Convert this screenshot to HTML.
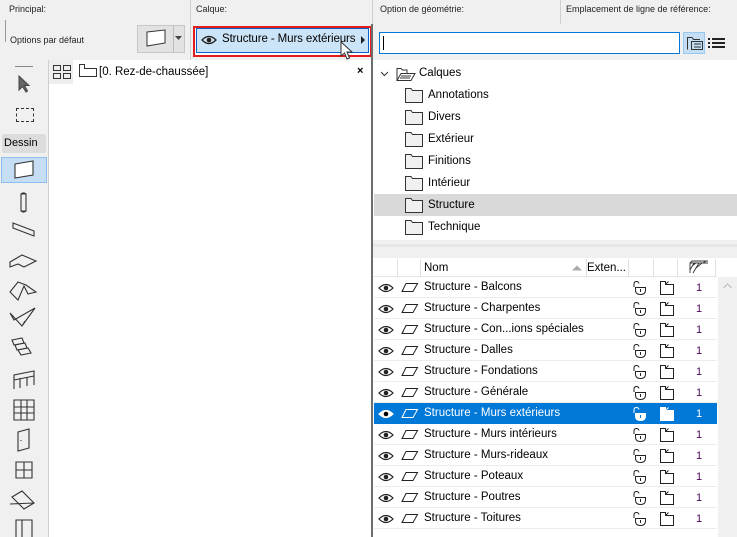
<!DOCTYPE html>
<html><head><meta charset="utf-8"><style>
*{box-sizing:border-box;margin:0;padding:0}
body{width:737px;height:537px;overflow:hidden;background:#f0f0f0;font-family:"Liberation Sans",sans-serif;font-size:11px;color:#000;position:relative}
.a{position:absolute}
.lbl{font-size:9px;color:#222}
.row{position:absolute;left:374px;width:343px;height:21px;border-bottom:1px solid #ececec;background:#fff}
.row .t{position:absolute;left:50px;top:4px;font-size:11.5px}
.row .n{position:absolute;left:322px;top:5px;color:#4a0a5a}
.row svg{position:absolute}
.tr{position:absolute;left:405px;height:22px;width:330px}
.tr .t{position:absolute;left:23px;top:5px;font-size:11.5px}
</style></head><body>
<div class="a lbl" style="left:9px;top:4px">Principal:</div>
<div class="a lbl" style="left:196px;top:4px">Calque:</div>
<div class="a lbl" style="left:380px;top:4px">Option de géométrie:</div>
<div class="a lbl" style="left:566px;top:4px">Emplacement de ligne de référence:</div>
<div class="a" style="left:190px;top:0;width:1px;height:60px;background:#d0d0d0"></div>
<div class="a" style="left:560px;top:0;width:1px;height:24px;background:#d0d0d0"></div>
<div class="a" style="left:372px;top:0;width:1px;height:24px;background:#d0d0d0"></div>
<div class="a" style="left:5px;top:20px;width:1px;height:22px;background:#999"></div>
<div class="a lbl" style="left:10px;top:35px">Options par défaut</div>
<div class="a" style="left:137px;top:25px;width:48px;height:28px;background:#e2e2e2;border:1px solid #c8c8c8"></div>
<svg class="a" style="left:145px;top:29px" width="22" height="20"><path d="M2 3 L20 1 L20 14 L2 17 Z" fill="#fff" stroke="#333"/></svg>
<div class="a" style="left:173px;top:26px;width:1px;height:26px;background:#bbb"></div>
<svg class="a" style="left:175px;top:36px" width="8" height="6"><path d="M0 0H7L3.5 4Z" fill="#444"/></svg>
<div class="a" style="left:193px;top:26px;width:179px;height:31px;border:2px solid #e31b1b;background:#fff"></div>
<div class="a" style="left:196px;top:28px;width:173px;height:25px;background:#cce4f7;border:1px solid #0a64c8"></div>
<svg class="a" style="left:201px;top:35px" width="16" height="10"><path d="M1 5Q8 -2 15 5Q8 12 1 5Z" fill="none" stroke="#222" stroke-width="1.3"/><circle cx="8" cy="5" r="2.3" fill="#222"/></svg>
<div class="a" style="left:222px;top:33px;font-size:11.5px;letter-spacing:-0.1px">Structure - Murs extérieurs</div>
<svg class="a" style="left:361px;top:36px" width="5" height="8"><path d="M0 0V8L4 4Z" fill="#222"/></svg>
<svg class="a" style="left:340px;top:41px" width="14" height="20"><path d="M1 1V15L4.5 12L7 18L9.5 17L7 11H12Z" fill="#fff" stroke="#333"/></svg>
<div class="a" style="left:0;top:60px;width:48px;height:477px;background:#f0f0f0"></div>
<div class="a" style="left:15px;top:66px;width:18px;height:1px;background:#888"></div>
<svg class="a" style="left:17px;top:75px" width="14" height="18"><path d="M2 1V15L5.5 11.5L9 17L10.5 16L7.5 10.5H12Z" fill="#666" stroke="#444"/></svg>
<div class="a" style="left:16px;top:108px;width:18px;height:14px;border:1px dashed #333"></div>
<div class="a" style="left:2px;top:134px;width:44px;height:19px;background:#dcdcdc;border-radius:2px"></div>
<div class="a" style="left:4px;top:137px;font-size:11px">Dessin</div>
<div class="a" style="left:1px;top:157px;width:46px;height:26px;background:#c6def4;border:1px solid #8cbff0"></div>
<svg class="a" style="left:0;top:0" width="48" height="537" fill="none" stroke="#333" stroke-width="1.1">
<g transform="translate(0,170)"><path d="M15 -6L33 -9V5L15 8Z" fill="#fff"/></g>
<g transform="translate(0,202)"><path d="M21 -8h5v17h-5Z M21 -8q2.5-2 5 0 M21 9q2.5 2 5 0"/></g>
<g transform="translate(0,230)"><path d="M13 -7L34 1V6L13 -2Z"/></g>
<g transform="translate(0,260)"><path d="M10 2L22 -5L36 1L24 7L18 4L10 7Z"/></g>
<g transform="translate(0,290)"><path d="M10 2L18 -8L26 -5L36 2L28 4L24 -4L18 10Z"/></g>
<g transform="translate(0,318)"><path d="M10 -5L22 8L35 -10L14 2Z M22 8L25 3"/></g>
<g transform="translate(0,347)"><path d="M12 -7L22 -9L24 -4L14 -2Z M15 -2L25 -4L27 1L17 3Z M18 3L28 1L31 6L21 8Z"/></g>
<g transform="translate(0,380)"><path d="M14 9V-5L34 -9V5 M14 0L34 -4 M20 -2V8 M27 -3V6"/></g>
<g transform="translate(0,410)"><path d="M14 -10H34V10H14Z M14 -3H34 M14 3H34 M21 -10V10 M27 -10V10"/></g>
<g transform="translate(0,440)"><path d="M18 -8L29 -11V8L18 11Z M21 0v1"/></g>
<g transform="translate(0,470)"><path d="M16 -8H32V8H16Z M16 0H32 M24 -8V8"/></g>
<g transform="translate(0,500)"><path d="M12 -3L22 -9L34 3L24 9Z M10 4L34 3"/></g>
<g transform="translate(0,528)"><path d="M16 -8H32V10H16Z M22 -8V10"/></g>
</svg>
<div class="a" style="left:48px;top:60px;width:1px;height:477px;background:#cfcfcf"></div>
<div class="a" style="left:50px;top:465px;width:14px;height:35px;background:#f3f3f3;border-radius:3px"></div>
<div class="a" style="left:58px;top:468px;width:0;height:30px;border-left:1px dashed #f0a060"></div>
<div class="a" style="left:49px;top:60px;width:322px;height:477px;background:#fff"></div>
<div class="a" style="left:49px;top:60px;width:24px;height:24px;background:#eee"></div>
<svg class="a" style="left:52px;top:64px" width="20" height="16" fill="none" stroke="#333"><rect x="1.5" y="1.5" width="7" height="5"/><rect x="11.5" y="1.5" width="7" height="5"/><rect x="1.5" y="9.5" width="7" height="5"/><rect x="11.5" y="9.5" width="7" height="5"/></svg>
<svg class="a" style="left:78px;top:62px" width="20" height="16" fill="none" stroke="#333"><path d="M1.5 14.5V2.5H6.5V6.5H18.5V14.5Z"/></svg>
<div class="a" style="left:99px;top:66px;font-size:11.5px">[0. Rez-de-chaussée]</div>
<div class="a" style="left:357px;top:65px;font-size:11px;font-weight:bold">×</div>
<div class="a" style="left:371px;top:24px;width:2px;height:513px;background:#6d6d6d"></div>
<div class="a" style="left:373px;top:24px;width:364px;height:36px;background:#f0f0f0"></div>
<div class="a" style="left:379px;top:32px;width:301px;height:22px;background:#fff;border:1px solid #0078d7"></div>
<div class="a" style="left:383px;top:36px;width:1px;height:14px;background:#000"></div>
<div class="a" style="left:683px;top:32px;width:22px;height:22px;background:#c6def4;border:1px solid #99c8f0"></div>
<svg class="a" style="left:686px;top:35px" width="18" height="16" fill="none" stroke="#333"><path d="M1.5 14.5V2.5H6L7.5 4.5H14"/><rect x="5.5" y="6.5" width="11" height="8"/><path d="M8 9H15 M8 12H15"/></svg>
<svg class="a" style="left:708px;top:37px" width="18" height="12" fill="#222"><rect x="0" y="1" width="2" height="2"/><rect x="4" y="1" width="13" height="2"/><rect x="0" y="5" width="2" height="2"/><rect x="4" y="5" width="13" height="2"/><rect x="0" y="9" width="2" height="2"/><rect x="4" y="9" width="13" height="2"/></svg>
<div class="a" style="left:373px;top:60px;width:364px;height:180px;background:#fff"></div>
<svg class="a" style="left:380px;top:66px" width="40" height="16" fill="none" stroke="#333"><path d="M1 6L4.5 9.5L8 6"/><path d="M17 14.5V2.5H21L22.5 4H27V7 M17 14.5L21 7.5H35L31 14.5Z M21 10H31 M20 12H30"/></svg>
<div class="a" style="left:419px;top:67px;font-size:11.5px">Calques</div>
<div class="a" style="left:374px;top:194px;width:363px;height:22px;background:#d9d9d9"></div>
<div class="tr" style="top:84px"><svg width="20" height="16" class="a" style="top:3px" fill="#f0f0f0" stroke="#333"><path d="M0.5 15.5V1.5H6L7.5 3.5H17.5V15.5Z"/></svg><div class="t">Annotations</div></div>
<div class="tr" style="top:106px"><svg width="20" height="16" class="a" style="top:3px" fill="#f0f0f0" stroke="#333"><path d="M0.5 15.5V1.5H6L7.5 3.5H17.5V15.5Z"/></svg><div class="t">Divers</div></div>
<div class="tr" style="top:128px"><svg width="20" height="16" class="a" style="top:3px" fill="#f0f0f0" stroke="#333"><path d="M0.5 15.5V1.5H6L7.5 3.5H17.5V15.5Z"/></svg><div class="t">Extérieur</div></div>
<div class="tr" style="top:150px"><svg width="20" height="16" class="a" style="top:3px" fill="#f0f0f0" stroke="#333"><path d="M0.5 15.5V1.5H6L7.5 3.5H17.5V15.5Z"/></svg><div class="t">Finitions</div></div>
<div class="tr" style="top:172px"><svg width="20" height="16" class="a" style="top:3px" fill="#f0f0f0" stroke="#333"><path d="M0.5 15.5V1.5H6L7.5 3.5H17.5V15.5Z"/></svg><div class="t">Intérieur</div></div>
<div class="tr" style="top:194px"><svg width="20" height="16" class="a" style="top:3px" fill="#f0f0f0" stroke="#333"><path d="M0.5 15.5V1.5H6L7.5 3.5H17.5V15.5Z"/></svg><div class="t">Structure</div></div>
<div class="tr" style="top:216px"><svg width="20" height="16" class="a" style="top:3px" fill="#f0f0f0" stroke="#333"><path d="M0.5 15.5V1.5H6L7.5 3.5H17.5V15.5Z"/></svg><div class="t">Technique</div></div>
<div class="a" style="left:373px;top:240px;width:364px;height:18px;background:#f0f0f0"></div>
<div class="a" style="left:373px;top:244px;width:364px;height:3px;background:#e6e6e6"></div>
<div class="a" style="left:373px;top:258px;width:364px;height:279px;background:#fff"></div>
<div class="a" style="left:718px;top:277px;width:19px;height:260px;background:#f0f0f0"></div>
<svg class="a" style="left:723px;top:283px" width="9" height="6"><path d="M0.5 5L4.5 1L8.5 5" fill="none" stroke="#bbb"/></svg>
<div class="a" style="left:374px;top:258px;width:343px;height:19px;background:#fff;border-bottom:1px solid #e5e5e5"></div>
<div class="a" style="left:397px;top:259px;width:1px;height:18px;background:#e0e0e0"></div>
<div class="a" style="left:420px;top:259px;width:1px;height:18px;background:#e0e0e0"></div>
<div class="a" style="left:586px;top:259px;width:1px;height:18px;background:#e0e0e0"></div>
<div class="a" style="left:628px;top:259px;width:1px;height:18px;background:#e0e0e0"></div>
<div class="a" style="left:653px;top:259px;width:1px;height:18px;background:#e0e0e0"></div>
<div class="a" style="left:677px;top:259px;width:1px;height:18px;background:#e0e0e0"></div>
<div class="a" style="left:715px;top:259px;width:1px;height:18px;background:#e0e0e0"></div>
<div class="a" style="left:424px;top:262px;font-size:11.5px">Nom</div>
<svg class="a" style="left:572px;top:265px" width="10" height="6"><path d="M0 5.5L5 0.5L10 5.5Z" fill="#aaa"/></svg>
<div class="a" style="left:587px;top:262px;font-size:11.5px">Exten...</div>
<svg class="a" style="left:689px;top:260px" width="20" height="14" fill="none" stroke="#333" stroke-width="0.9"><path d="M1 13V3H19 M1 3L3 1H19 M4 13L10 3 M7 8L13 3 M3 6L7 3 M1 10L5 3 M14 3L17 1"/></svg>
<div id="rows"></div>
<script>
var names=["Balcons","Charpentes","Con...ions spéciales","Dalles","Fondations","Générale","Murs extérieurs","Murs intérieurs","Murs-rideaux","Poteaux","Poutres","Toitures"];
var h="";
names.forEach(function(n,i){
 var sel=i==6, c=sel?"#fff":"#222", top=277+i*21;
 h+='<div class="row" style="top:'+top+'px;'+(sel?'background:#0078d7;color:#fff;border-bottom-color:#0078d7':'')+'">'+
 '<svg style="left:4px;top:6px" width="16" height="10"><path d="M1 5Q8 -2 15 5Q8 12 1 5Z" fill="'+(sel?'#fff':'none')+'" stroke="'+(sel?'#fff':'#222')+'" stroke-width="1.2"/><circle cx="8" cy="5" r="2.3" fill="'+(sel?'#000':'#222')+'"/></svg>'+
 '<svg style="left:27px;top:5px" width="18" height="11"><path d="M5 1.5H16.5L12 9.5H1Z M1 9.5L2.5 7" fill="none" stroke="'+c+'"/></svg>'+
 '<div class="t" style="color:'+(sel?'#fff':'#000')+'">Structure - '+n+'</div>'+
 '<svg style="left:258px;top:3px" width="16" height="16"><path d="M2 7V4Q2 1.5 4.5 1.5Q6.5 1.5 7 3.5" fill="none" stroke="'+c+'"/><path d="M3.5 7.5H13.5V10Q13.5 14.5 8.5 14.5Q3.5 14.5 3.5 10Z" fill="'+(sel?'#fff':'none')+'" stroke="'+c+'"/><path d="M8.5 9V12" stroke="'+(sel?'#0078d7':'#222')+'"/></svg>'+
 '<svg style="left:285px;top:3px" width="16" height="16"><path d="M1.5 14.5V1.5H6.5V4.5H14.5V14.5Z M6.5 4.5L9.5 1.5" fill="'+(sel?'#fff':'none')+'" stroke="'+c+'"/></svg>'+
 '<div class="n" style="color:'+(sel?'#fff':'#4a0a5a')+'">1</div></div>';
});
document.getElementById("rows").innerHTML=h;
</script>
</body></html>
